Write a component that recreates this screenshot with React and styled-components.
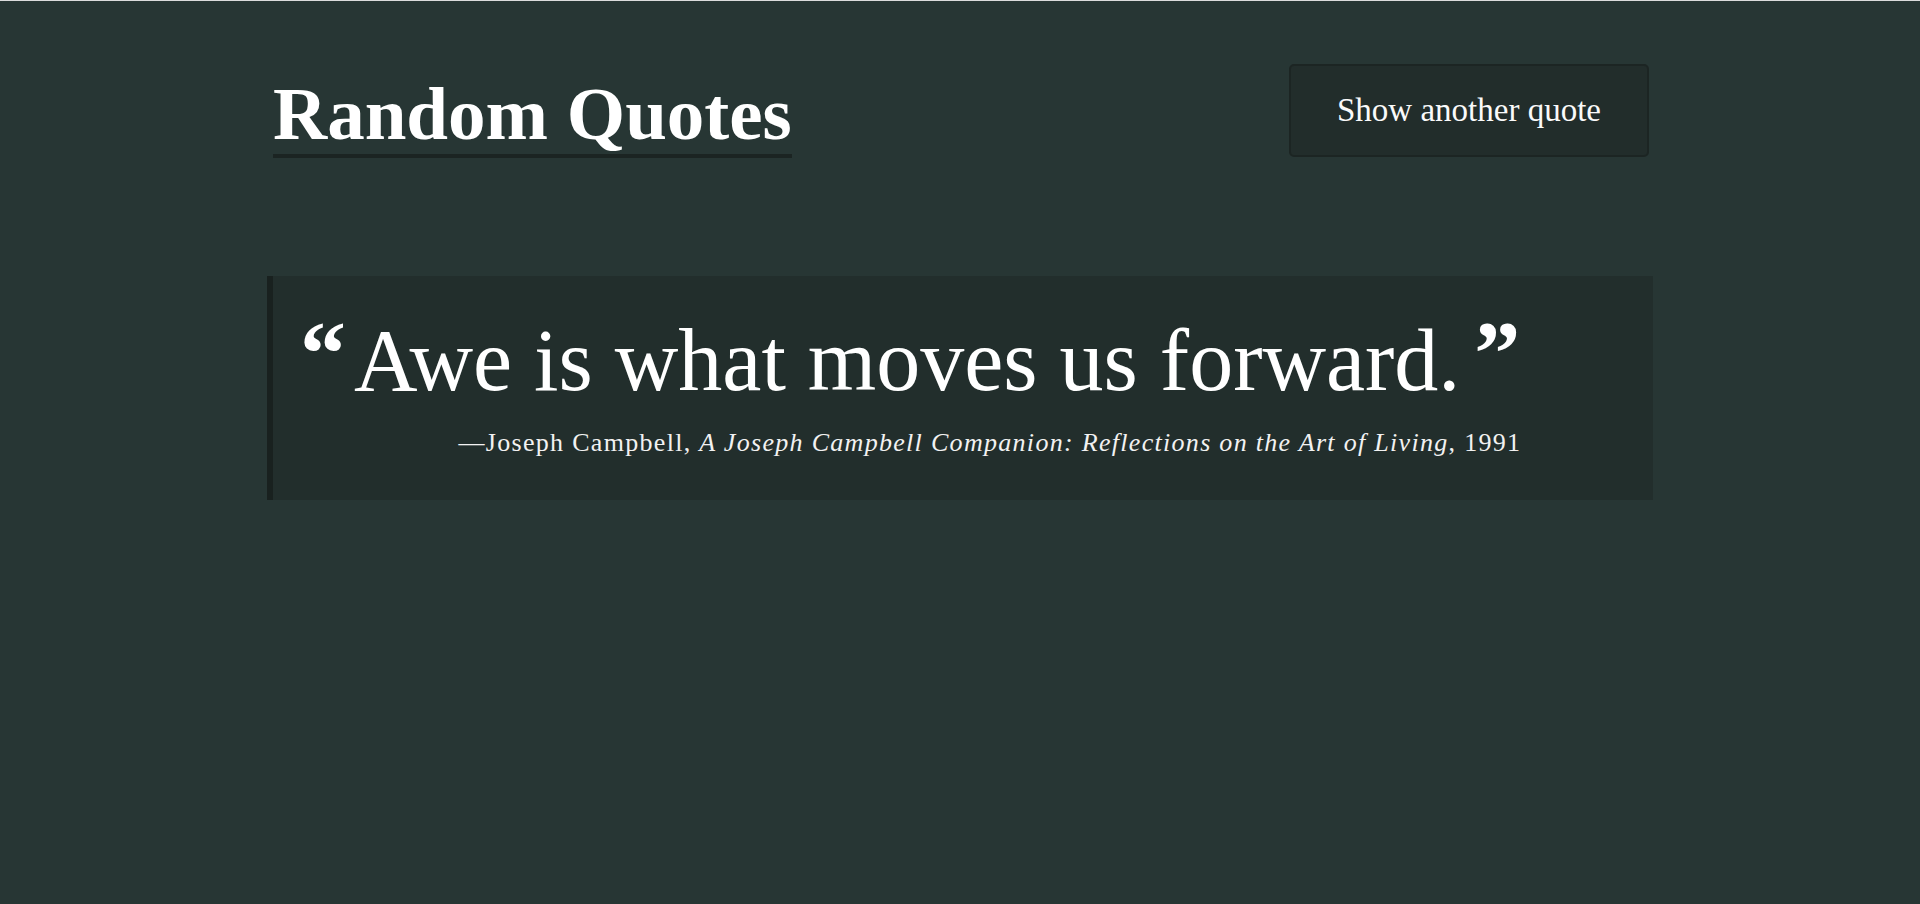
import React from "react";
import styled, { createGlobalStyle } from "styled-components";

const GlobalStyle = createGlobalStyle`
  html, body {
    margin: 0;
    padding: 0;
  }
  body {
    background: #273634;
    border-top: 1px solid #dcdcdc;
    min-height: 903px;
    font-family: "Liberation Serif", "Times New Roman", serif;
    color: #fff;
  }
`;

const Page = styled.main`
  width: 1386px;
  margin: 0 auto;
`;

const Header = styled.header`
  display: flex;
  justify-content: space-between;
  align-items: flex-start;
  padding: 63px 4px 0 6px;
`;

const Title = styled.h1`
  margin: 12px 0 0;
  font-size: 75px;
  font-weight: 700;
  line-height: 1;
  padding-bottom: 3px;
  border-bottom: 4px solid #1b2422;
`;

const NextButton = styled.button`
  width: 360px;
  height: 93px;
  background: #222d2b;
  border: 2px solid #1c2523;
  border-radius: 5px;
  color: #fafafa;
  font-family: "Liberation Serif", "Times New Roman", serif;
  font-size: 33px;
  cursor: pointer;
`;

const QuoteCard = styled.section`
  margin-top: 118px;
  background: #222e2c;
  border-left: 6px solid #19211f;
  padding: 41px 27px 41px 27px;
`;

const Figure = styled.figure`
  display: inline-flex;
  flex-direction: column;
  align-items: flex-end;
  margin: 0;
`;

const Line = styled.blockquote`
  display: flex;
  align-items: flex-start;
  margin: 0;
  font-size: 88px;
  line-height: 1;
`;

const Mark = styled.span`
  font-size: 92px;
  font-weight: 700;
  line-height: 1;
  margin-top: -10px;
  margin-left: ${(p) => (p.$close ? "14px" : "0")};
  margin-right: ${(p) => (p.$close ? "0" : "8px")};
`;

const Attribution = styled.figcaption`
  margin-top: 25px;
  margin-right: -1px;
  margin-bottom: 3px;
  font-size: 26px;
  line-height: 1;
  letter-spacing: 1.3px;
  color: #f2f2f2;

  cite {
    font-style: italic;
  }
`;

export default function App() {
  return (
    <>
      <GlobalStyle />
      <Page>
        <Header>
          <Title>Random Quotes</Title>
          <NextButton>Show another quote</NextButton>
        </Header>
        <QuoteCard>
          <Figure>
            <Line>
              <Mark>“</Mark>
              Awe is what moves us forward.
              <Mark $close>”</Mark>
            </Line>
            <Attribution>
              —Joseph Campbell, <cite>A Joseph Campbell Companion: Reflections on the Art of Living</cite>, 1991
            </Attribution>
          </Figure>
        </QuoteCard>
      </Page>
    </>
  );
}
